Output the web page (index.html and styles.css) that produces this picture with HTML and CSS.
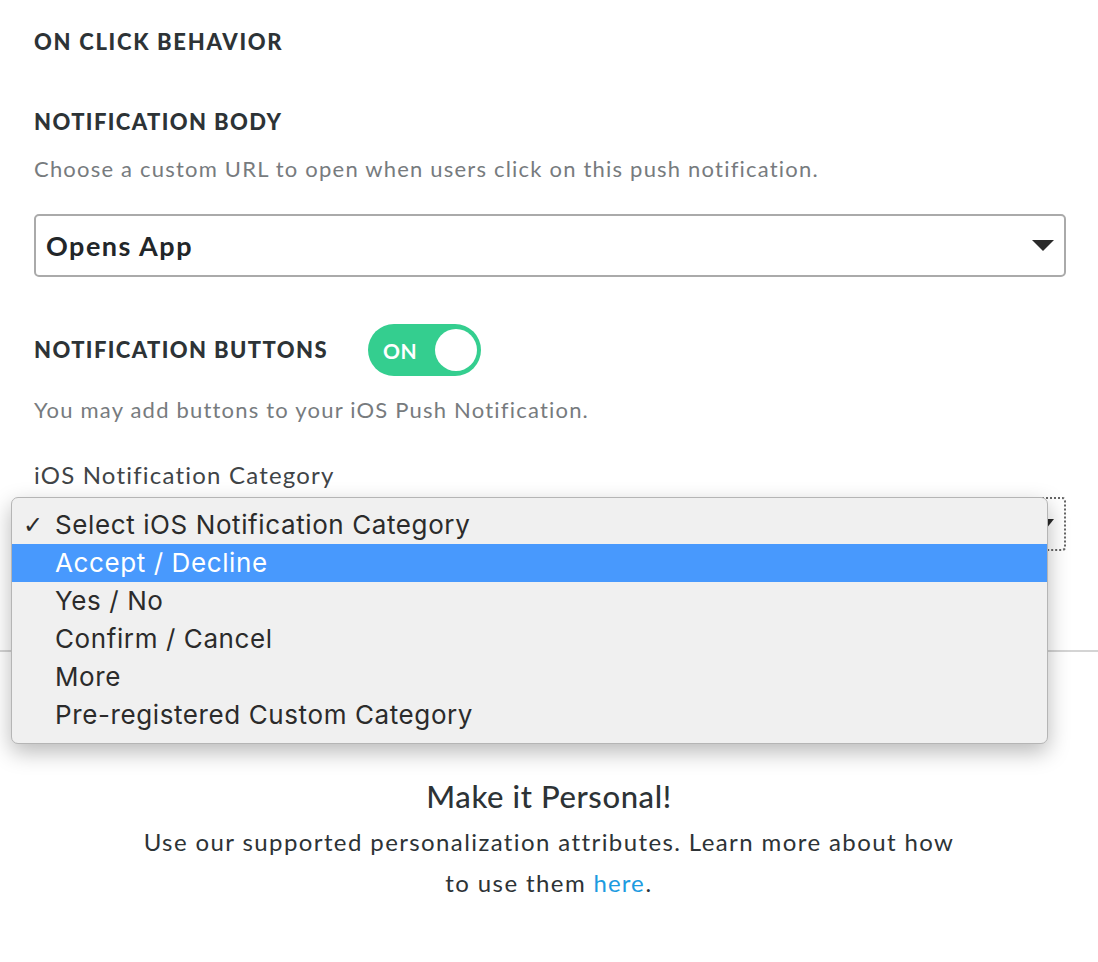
FILE: index.html
```html
<!DOCTYPE html>
<html lang="en">
<head>
<meta charset="utf-8">
<title>On Click Behavior</title>
<link rel="stylesheet" href="styles.css">
</head>
<body>
<main class="page">
  <section class="form">
    <h2 class="section-title">ON CLICK BEHAVIOR</h2>
    <h3 class="field-title body-title">NOTIFICATION BODY</h3>
    <p class="help">Choose a custom URL to open when users click on this push notification.</p>
    <div class="select">
      <span class="select-value">Opens App</span>
      <span class="caret"></span>
    </div>
    <div class="toggle-row">
      <h3 class="field-title">NOTIFICATION BUTTONS</h3>
      <div class="toggle">
        <span class="toggle-label">ON</span>
        <span class="knob"></span>
      </div>
    </div>
    <p class="help help-buttons">You may add buttons to your iOS Push Notification.</p>
    <label class="label">iOS Notification Category</label>
    <div class="select-wrap">
      <div class="select select-focused">
        <span class="caret caret-small"></span>
      </div>
      <ul class="menu">
        <li class="menu-item checked"><span class="check">✓</span>Select iOS Notification Category</li>
        <li class="menu-item active">Accept / Decline</li>
        <li class="menu-item">Yes / No</li>
        <li class="menu-item">Confirm / Cancel</li>
        <li class="menu-item">More</li>
        <li class="menu-item">Pre-registered Custom Category</li>
      </ul>
    </div>
  </section>
  <hr class="divider">
  <section class="personal">
    <h2 class="personal-title">Make it Personal!</h2>
    <p class="personal-text">Use our supported personalization attributes. Learn more about how to use them <a href="#" class="link">here</a>.</p>
  </section>
</main>
</body>
</html>
```

FILE: styles.css
```css
* { box-sizing: border-box; }

html, body {
  margin: 0;
  padding: 0;
  background: #ffffff;
}

body {
  font-family: Lato, "Noto Sans", sans-serif;
  color: #2d3336;
  width: 1098px;
  height: 962px;
  overflow: hidden;
}

.page {
  padding-top: 28px;
}

.form {
  padding: 0 32px 0 34px;
}

.section-title,
.field-title {
  margin: 0;
  font-size: 22px;
  line-height: 28px;
  font-weight: 900;
  letter-spacing: 1.4px;
  color: #2d3336;
  white-space: nowrap;
}

.section-title {
  letter-spacing: 1.7px;
}

.body-title {
  margin-top: 52px;
}

.help {
  margin: 19px 0 0;
  font-size: 22px;
  line-height: 28px;
  font-weight: 400;
  letter-spacing: 1.2px;
  color: #777b7e;
}

.select {
  margin-top: 31px;
  height: 63px;
  border: 2px solid #aaaaaa;
  border-radius: 5px;
  display: flex;
  align-items: center;
  justify-content: space-between;
  padding: 0 10px 0 10px;
  background: #fff;
}

.select-value {
  font-size: 27px;
  font-weight: 700;
  letter-spacing: 1.5px;
  color: #222629;
}

.caret {
  width: 0;
  height: 0;
  border-left: 11px solid transparent;
  border-right: 11px solid transparent;
  border-top: 11px solid #2a2a2a;
}

.toggle-row {
  margin-top: 47px;
  display: flex;
  align-items: center;
  gap: 40px;
}

.toggle {
  width: 113px;
  height: 52px;
  border-radius: 26px;
  background: #34ce8f;
  display: flex;
  align-items: center;
  justify-content: space-between;
  padding: 0 4px 0 15px;
}

.toggle-label {
  color: #ffffff;
  font-size: 21px;
  font-weight: 700;
  letter-spacing: 0.5px;
}

.knob {
  width: 42px;
  height: 42px;
  border-radius: 50%;
  background: #ffffff;
}

.help-buttons {
  margin-top: 20px;
}

.label {
  display: block;
  margin-top: 37px;
  font-size: 24px;
  line-height: 28px;
  letter-spacing: 1.2px;
  color: #3f4447;
}

.select-wrap {
  position: relative;
  margin-top: 8px;
}

.select-focused {
  margin-top: 0;
  height: 54px;
  border: 2px dotted #666;
  border-radius: 4px;
  justify-content: flex-end;
  padding-right: 10px;
}

.caret-small {
  border-left-width: 8px;
  border-right-width: 8px;
  border-top-width: 10px;
}

.menu {
  position: absolute;
  top: 0;
  left: -23px;
  width: 1037px;
  margin: 0;
  padding: 8px 0 9px;
  list-style: none;
  background: #f0f0f0;
  border: 1px solid #b5b5b5;
  border-radius: 7px;
  box-shadow: 0 8px 22px rgba(0, 0, 0, 0.28);
  font-family: Inter, "Liberation Sans", sans-serif;
  z-index: 2;
}

.menu-item {
  height: 38px;
  line-height: 38px;
  padding-left: 43px;
  font-size: 26px;
  letter-spacing: 0.6px;
  color: #2b2b2b;
  position: relative;
}

.menu-item.active {
  background: #4899fd;
  color: #ffffff;
}

.check {
  position: absolute;
  left: 11px;
  top: 0;
  font-family: "DejaVu Sans", sans-serif;
  font-size: 24px;
  font-weight: 400;
}

.divider {
  margin: 99px 0 0;
  border: 0;
  border-top: 2px solid #d4d4d4;
  height: 0;
}

.personal {
  text-align: center;
  padding-top: 126px;
}

.personal-title {
  margin: 0;
  font-size: 31px;
  line-height: 36px;
  font-weight: 500;
  letter-spacing: 0.6px;
  color: #2d3336;
}

.personal-text {
  margin: 7px auto 0;
  max-width: 830px;
  font-size: 24px;
  line-height: 41px;
  letter-spacing: 1.4px;
  color: #2d3336;
}

.link {
  color: #1c9be0;
  text-decoration: none;
  letter-spacing: 1px;
  margin-right: 1px;
}
```
